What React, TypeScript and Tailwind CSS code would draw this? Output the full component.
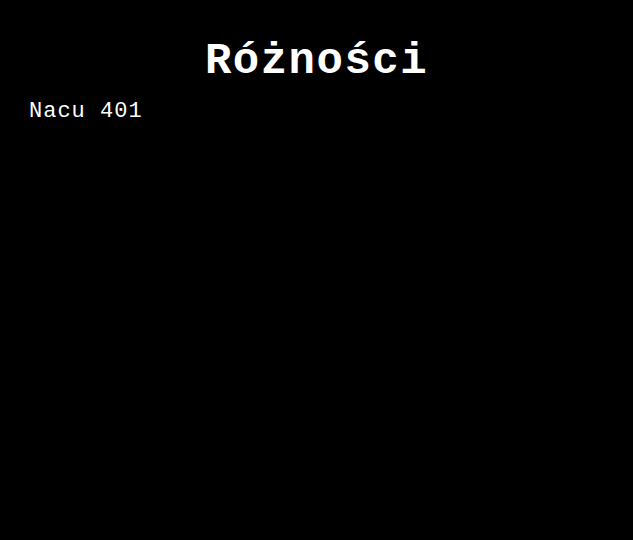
import React from 'react';

export default function App() {
    return (
        <div className="min-h-screen w-full bg-black text-white font-['Liberation_Mono','DejaVu_Sans_Mono',monospace]">
            <h1 className="pt-[33px] text-center text-[44px] font-bold leading-[56px] tracking-[1.5px]">Różności</h1>
            <div className="px-[29px] pt-[9px]">
                <p className="text-[22px] leading-[28px] tracking-[1px]">Nacu 401</p>
            </div>
        </div>
    );
}
